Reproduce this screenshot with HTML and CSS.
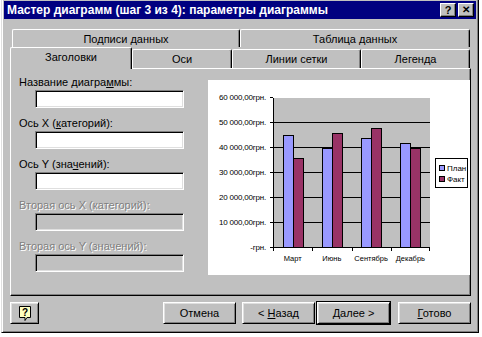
FILE: index.html
```html
<!DOCTYPE html>
<html lang="ru">

<head>
  <meta charset="UTF-8" />
  <title>Мастер диаграмм</title>
  <link rel="stylesheet" href="styles.css">
</head>

<body>
  <div class="window">
    <div class="titlebar">
      <span class="title">Мастер диаграмм (шаг 3 из 4): параметры диаграммы</span>
      <div class="title-buttons">
        <span class="tbtn">?</span>
        <span class="tbtn close">✕</span>
      </div>
    </div>

    <div class="tab-row back">
      <div class="tab w-labels">Подписи данных</div>
      <div class="tab w-table">Таблица данных</div>
    </div>
    <div class="tab-row front">
      <div class="tab active w-titles">Заголовки</div>
      <div class="tab w-axes">Оси</div>
      <div class="tab w-grid">Линии сетки</div>
      <div class="tab w-legend">Легенда</div>
    </div>

    <div class="panel">
      <div class="fields">
        <div class="field">
          <label>Название диагра<u>м</u>мы:</label>
          <input type="text" />
        </div>
        <div class="field">
          <label>Ось X (<u>к</u>атегорий):</label>
          <input type="text" />
        </div>
        <div class="field">
          <label>Ось Y (зна<u>ч</u>ений):</label>
          <input type="text" />
        </div>
        <div class="field disabled">
          <label>Вторая ось X (категорий):</label>
          <input type="text" disabled />
        </div>
        <div class="field disabled">
          <label>Вторая ось Y (значений):</label>
          <input type="text" disabled />
        </div>
      </div>

      <div class="chart">
        <div class="y-labels">
          <div class="y-label"><span>60 000,00грн.</span><i></i></div>
          <div class="y-label"><span>50 000,00грн.</span><i></i></div>
          <div class="y-label"><span>40 000,00грн.</span><i></i></div>
          <div class="y-label"><span>30 000,00грн.</span><i></i></div>
          <div class="y-label"><span>20 000,00грн.</span><i></i></div>
          <div class="y-label"><span>10 000,00грн.</span><i></i></div>
          <div class="y-label"><span>-грн.</span><i></i></div>
        </div>

        <div class="plot">
          <div class="category">
            <div class="bar plan" style="height: 75%"></div>
            <div class="bar fact" style="height: 60%"></div>
          </div>
          <div class="category">
            <div class="bar plan" style="height: 66.7%"></div>
            <div class="bar fact" style="height: 76.7%"></div>
          </div>
          <div class="category">
            <div class="bar plan" style="height: 73.3%"></div>
            <div class="bar fact" style="height: 80%"></div>
          </div>
          <div class="category">
            <div class="bar plan" style="height: 70%"></div>
            <div class="bar fact" style="height: 66.7%"></div>
          </div>
        </div>

        <div class="legend">
          <div class="legend-item"><span class="swatch plan"></span>План</div>
          <div class="legend-item"><span class="swatch fact"></span>Факт</div>
        </div>

        <div class="x-labels">
          <span>Март</span>
          <span>Июнь</span>
          <span>Сентябрь</span>
          <span>Декабрь</span>
        </div>
      </div>
    </div>

    <div class="footer">
      <button class="btn help">
        <svg width="14" height="17" viewBox="0 0 14 17">
          <path d="M1.5 1.5 H12.5 V12.5 H9 L7 15.5 V12.5 H1.5 Z" fill="#ffffc0" stroke="#000" />
          <text x="7" y="11" text-anchor="middle" font-family="Liberation Sans, sans-serif" font-size="10" font-weight="bold" fill="#000">?</text>
        </svg>
      </button>
      <button class="btn cancel">Отмена</button>
      <button class="btn back-btn">&lt; <u>Н</u>азад</button>
      <button class="btn default">Далее &gt;</button>
      <button class="btn finish"><u>Г</u>отово</button>
    </div>
  </div>
</body>

</html>
```

FILE: styles.css
```css
body {
  margin: 0;
  background: #ffffff;
  font-family: 'Liberation Sans', Arial, sans-serif;
  font-size: 11px;
  color: #000;
}

.window {
  width: 472px;
  height: 329px;
  margin: -2px 0 0 1px;
  padding: 2px;
  background: #c0c0c0;
  border: 1px solid;
  border-color: #dfdfdf #000 #000 #dfdfdf;
  box-shadow: inset 1px 1px #fff, inset -1px -1px #808080;
  display: flex;
  flex-direction: column;
}

/* title bar */
.titlebar {
  height: 18px;
  background: #000080;
  display: flex;
  align-items: center;
  padding: 0 2px 0 3px;
}

.title {
  color: #fff;
  font-weight: bold;
  font-size: 12px;
  flex: 1;
}

.title-buttons {
  display: flex;
  gap: 2px;
}

.tbtn {
  width: 16px;
  height: 14px;
  box-sizing: border-box;
  background: #c0c0c0;
  border: 1px solid;
  border-color: #fff #000 #000 #fff;
  box-shadow: inset -1px -1px #808080;
  font-weight: bold;
  font-size: 11px;
  line-height: 12px;
  text-align: center;
}

.tbtn.close {
  font-size: 10px;
}

/* tabs */
.tab-row {
  display: flex;
}

.tab-row.back {
  margin: 10px 0 0 8px;
  height: 18px;
}

.tab-row.front {
  margin-left: 6px;
  height: 21px;
  align-items: flex-end;
}

.tab {
  box-sizing: border-box;
  height: 100%;
  border-top: 1px solid #fff;
  border-left: 1px solid #fff;
  border-right: 1px solid #000;
  box-shadow: inset -1px 0 #808080;
  border-radius: 2px 2px 0 0;
  display: flex;
  align-items: center;
  justify-content: center;
  background: #c0c0c0;
}

.front .tab {
  height: 19px;
}

.front .tab.active {
  height: 22px;
  margin-bottom: -1px;
  position: relative;
  z-index: 1;
  padding-bottom: 3px;
}

.w-labels { width: 228px; }
.w-table { width: 230px; }
.w-titles { width: 122px; }
.w-axes { width: 100px; }
.w-grid { width: 129px; }
.w-legend { width: 109px; }

/* main panel */
.panel {
  margin-left: 6px;
  width: 461px;
  height: 228px;
  box-sizing: border-box;
  border: 1px solid;
  border-color: #fff #000 #000 #fff;
  box-shadow: inset -1px -1px #808080;
  display: flex;
}

.fields {
  padding: 6px 0 0 8px;
  width: 181px;
}

.field {
  display: flex;
  flex-direction: column;
  margin-bottom: 8px;
}

.field label {
  line-height: 14px;
  height: 14px;
}

.field input {
  width: 149px;
  height: 18px;
  box-sizing: border-box;
  margin: 1px 0 0 16px;
  border: 1px solid;
  border-color: #808080 #fff #fff #808080;
  box-shadow: inset 1px 1px #000, inset -1px -1px #dfdfdf;
  background: #fff;
  font-family: inherit;
  font-size: 11px;
}

.field.disabled label {
  color: #808080;
  text-shadow: 1px 1px #fff;
}

.field.disabled input {
  background: #c0c0c0;
}

/* chart */
.chart {
  margin: 11px 0 0 auto;
  width: 262px;
  height: 195px;
  box-sizing: border-box;
  background: #fff;
  padding-top: 18px;
  display: grid;
  grid-template-columns: 65px 157px 1fr;
  grid-template-rows: 150px auto;
  font-size: 7px;
}

.y-labels {
  margin-top: -13px;
  height: 175px;
  display: flex;
  flex-direction: column;
  font-size: 8px;
}

.y-label {
  height: 25px;
  display: flex;
  align-items: center;
  justify-content: flex-end;
}

.y-label span {
  margin-right: 4px;
  letter-spacing: -0.2px;
}

.y-label i {
  width: 3px;
  height: 1px;
  background: #000;
}

.plot {
  background-color: #c0c0c0;
  background-image: repeating-linear-gradient(to bottom, transparent 0 24px, #000 24px 25px);
  border-left: 1px solid #000;
  border-bottom: 1px solid #000;
  display: flex;
  box-sizing: border-box;
}

.category {
  flex: 1;
  display: flex;
  align-items: flex-end;
  justify-content: center;
}

.bar {
  width: 11px;
  box-sizing: border-box;
  border: 1px solid #000;
  border-bottom: none;
}

.bar + .bar {
  margin-left: -1px;
}

.plan {
  background: #9999ff;
}

.fact {
  background: #993366;
}

.legend {
  align-self: center;
  justify-self: start;
  margin-left: 5px;
  width: 33px;
  height: 30px;
  box-sizing: border-box;
  border: 1px solid #000;
  background: #fff;
  padding: 4px 0 0 3px;
  font-size: 8px;
}

.legend-item {
  display: flex;
  align-items: center;
  height: 10px;
  white-space: nowrap;
  margin-bottom: 1px;
}

.swatch {
  width: 4px;
  height: 4px;
  border: 1px solid #000;
  margin-right: 2px;
  flex: none;
}

.x-labels {
  grid-column: 2;
  display: flex;
  height: 16px;
  font-size: 7.5px;
}

.x-labels span {
  flex: 1;
  text-align: center;
  padding-top: 6px;
  background: linear-gradient(#000, #000) left top / 1px 3px no-repeat;
}

.x-labels span:last-child {
  background:
    linear-gradient(#000, #000) left top / 1px 3px no-repeat,
    linear-gradient(#000, #000) right top / 1px 3px no-repeat;
}

/* buttons */
.footer {
  display: flex;
  margin-top: 6px;
  padding-left: 6px;
}

.btn {
  height: 22px;
  width: 73px;
  box-sizing: border-box;
  background: #c0c0c0;
  border: 1px solid;
  border-color: #fff #000 #000 #fff;
  box-shadow: inset 1px 1px #dfdfdf, inset -1px -1px #808080;
  font-family: inherit;
  font-size: 11px;
  color: #000;
  padding: 0;
}

.btn.help {
  width: 29px;
  display: flex;
  align-items: center;
  justify-content: center;
}

.btn.cancel {
  margin-left: auto;
}

.btn.back-btn {
  margin-left: 6px;
}

.btn.default {
  margin-left: 2px;
  outline: 1px solid #000;
  outline-offset: 0;
  border-color: #fff #000 #000 #fff;
}

.btn.finish {
  margin: 0 5px 0 8px;
}
```
